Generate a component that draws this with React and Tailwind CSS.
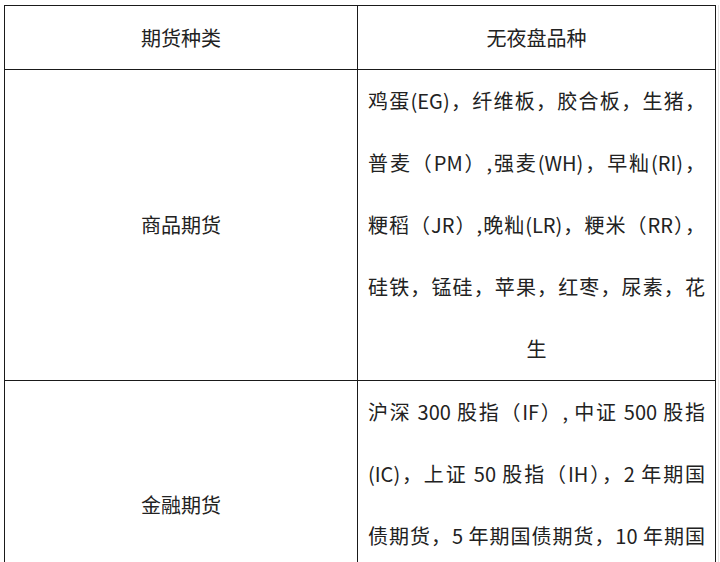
const rows = [
  {
    kind: '商品期货',
    lines: [
      '鸡蛋(EG)，纤维板，胶合板，生猪，',
      '普麦（PM）,强麦(WH)，早籼(RI)，',
      '粳稻（JR）,晚籼(LR)，粳米（RR），',
      '硅铁，锰硅，苹果，红枣，尿素，花',
    ],
    last: '生',
  },
  {
    kind: '金融期货',
    lines: [
      '沪深 300 股指（IF）, 中证 500 股指',
      '(IC)，上证 50 股指（IH），2 年期国',
      '债期货，5 年期国债期货，10 年期国',
    ],
    last: '债期货',
  },
]

export default function App() {
  return (
    <div className="w-[720px] h-[562px] overflow-hidden bg-white flex pl-[4px] pt-[5px] text-[20px] text-[#222] font-['Noto_Sans_CJK_SC','Noto_Sans',sans-serif]">
      <table className="w-[711px] border-collapse self-start table-fixed">
        <colgroup>
          <col className="w-[353px]" />
          <col className="w-[358px]" />
        </colgroup>
        <thead>
          <tr className="h-[64px]">
            <th className="border border-[#1a1a1a] font-normal text-center align-middle">期货种类</th>
            <th className="border border-[#1a1a1a] font-normal text-center align-middle">无夜盘品种</th>
          </tr>
        </thead>
        <tbody>
          {rows.map((row) => (
            <tr key={row.kind}>
              <td className="border border-[#1a1a1a] text-center align-middle">{row.kind}</td>
              <td className="border border-[#1a1a1a] px-[10px] py-0 align-top">
                {row.lines.map((line) => (
                  <div key={line} className="leading-[62px] text-justify [text-align-last:justify] whitespace-nowrap">
                    {line}
                  </div>
                ))}
                <div className="leading-[62px] text-center">{row.last}</div>
              </td>
            </tr>
          ))}
        </tbody>
      </table>
      <div className="ml-[2px] w-px self-stretch bg-[#e4e4e4]" />
    </div>
  )
}
